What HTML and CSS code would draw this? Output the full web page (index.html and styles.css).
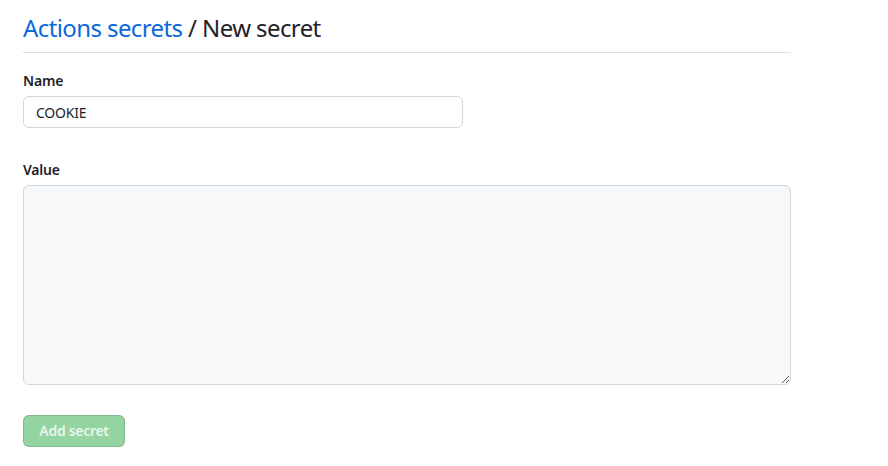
FILE: index.html
```html
<!DOCTYPE html>
<html>
<head>
<meta charset="utf-8">
<link rel="stylesheet" href="styles.css">
</head>
<body>
<div class="page">
  <h2 class="subhead"><a class="crumb" href="#">Actions secrets</a> / New secret</h2>
  <form class="form">
    <div class="group">
      <label class="label" for="name">Name</label>
      <input class="input" id="name" type="text" value="COOKIE">
    </div>
    <div class="group group-value">
      <label class="label" for="value">Value</label>
      <textarea class="textarea" id="value"></textarea>
    </div>
    <button class="btn" type="button" disabled>Add secret</button>
  </form>
</div>
</body>
</html>
```

FILE: styles.css
```css
* { box-sizing: border-box; }
html, body { margin: 0; background: #fff; }
body {
  font-family: "Noto Sans", "Open Sans", sans-serif;
  font-size: 14px;
  line-height: 1.5;
  color: #1f2328;
}
.page {
  width: 768px;
  margin-left: 23px;
  padding-top: 10px;
}
.subhead {
  margin: 0;
  font-size: 24px;
  font-weight: 400;
  line-height: 36px;
  letter-spacing: -0.6px;
  padding-bottom: 6px;
  border-bottom: 1px solid #d8dee4;
  color: #1f2328;
}
.crumb { color: #0969da; text-decoration: none; }
.form { display: flex; flex-direction: column; align-items: flex-start; }
.group { display: flex; flex-direction: column; align-items: flex-start; margin-top: 17px; width: 100%; }
.group-value { margin-top: 31px; }
.label {
  font-weight: 600;
  font-size: 14px;
  line-height: 21px;
  margin-bottom: 5px;
  letter-spacing: -0.2px;
}
.input {
  width: 440px;
  height: 32px;
  padding: 5px 12px;
  font: inherit;
  font-size: 14px;
  letter-spacing: -0.2px;
  color: #1f2328;
  background: #fff;
  border: 1px solid #d0d7de;
  border-radius: 6px;
  outline: none;
}
.textarea {
  display: block;
  width: 768px;
  height: 200px;
  padding: 8px 12px;
  font: inherit;
  background: #f6f8fa;
  border: 1px solid #d0d7de;
  border-radius: 6px;
  resize: vertical;
  outline: none;
}
.btn {
  margin-top: 30px;
  width: 102px;
  height: 32px;
  padding: 0;
  white-space: nowrap;
  font: inherit;
  font-size: 14px;
  font-weight: 600;
  letter-spacing: -0.3px;
  line-height: 20px;
  color: rgba(255,255,255,0.8);
  background: #94d3a2;
  border: 1px solid rgba(31,35,40,0.15);
  border-radius: 6px;
}
```
